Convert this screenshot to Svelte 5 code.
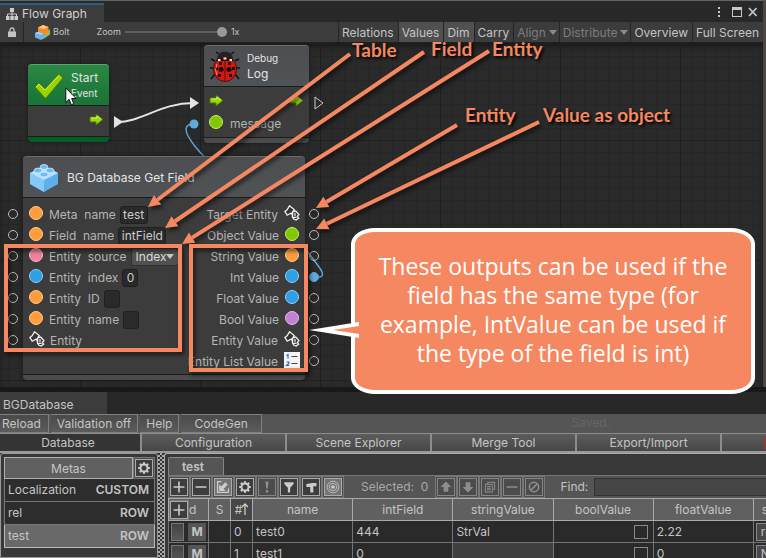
<script>
  const graphTools = [
    { label: 'Relations' },
    { label: 'Values', on: true },
    { label: 'Dim', on: true },
    { label: 'Carry' },
    { label: 'Align', off: true, menu: true },
    { label: 'Distribute', off: true, menu: true },
    { label: 'Overview' },
    { label: 'Full Screen' }
  ];
  const inputs = [
    { label: 'Meta  name', kind: 'orange', value: 'test', width: 28 },
    { label: 'Field  name', kind: 'orange', value: 'intField', width: 48 },
    { label: 'Entity  source', kind: 'pink', options: ['Index', 'Id', 'Name'] },
    { label: 'Entity  index', kind: 'blue', value: '0', width: 16 },
    { label: 'Entity  ID', kind: 'orange', value: '', width: 16 },
    { label: 'Entity  name', kind: 'orange', value: '', width: 16 },
    { label: 'Entity', kind: 'entity' }
  ];
  const outputs = [
    { label: 'Target Entity', kind: 'entity' },
    { label: 'Object Value', kind: 'green' },
    { label: 'String Value', kind: 'orange' },
    { label: 'Int Value', kind: 'blue', wired: true },
    { label: 'Float Value', kind: 'blue' },
    { label: 'Bool Value', kind: 'purple' },
    { label: 'Entity Value', kind: 'entity' },
    { label: 'Entity List Value', kind: 'list' }
  ];
  const arrows = [
    { x1: 350, y1: 54, x2: 148, y2: 207 },
    { x1: 424, y1: 52, x2: 165, y2: 228 },
    { x1: 489, y1: 51, x2: 182, y2: 244 },
    { x1: 457, y1: 125, x2: 316, y2: 208 },
    { x1: 539, y1: 122, x2: 316, y2: 229 }
  ];
  const notes = [
    { text: 'Table', x: 352, y: 38 },
    { text: 'Field', x: 431, y: 37 },
    { text: 'Entity', x: 492, y: 37 },
    { text: 'Entity', x: 465, y: 103 },
    { text: 'Value as object', x: 543, y: 103 }
  ];
  const dbButtons = ['Reload', 'Validation off', 'Help', 'CodeGen'];
  const dbTabs = ['Database', 'Configuration', 'Scene Explorer', 'Merge Tool', 'Export/Import'];
  const metas = [
    { name: 'Localization', type: 'CUSTOM' },
    { name: 'rel', type: 'ROW' },
    { name: 'test', type: 'ROW', on: true }
  ];
  const rows = [
    { n: 0, name: 'test0', int: '444', str: 'StrVal', float: '2.22', ref: 're' },
    { n: 1, name: 'test1', int: '0', str: '', float: '0', ref: 'N' }
  ];
  // Shaft ends and head corners of an arrow, in canvas pixels
  function shape(a) {
    const d = Math.hypot(a.x2 - a.x1, a.y2 - a.y1);
    const ux = (a.x2 - a.x1) / d;
    const uy = (a.y2 - a.y1) / d;
    const bx = a.x2 - ux * 12;
    const by = a.y2 - uy * 12;
    return {
      bx, by,
      head: `${a.x2},${a.y2} ${bx - uy * 6},${by + ux * 6} ${bx + uy * 6},${by - ux * 6}`
    };
  }
</script>

{#snippet icon(name)}
  <svg viewBox="0 0 18 18" width="18" height="18" aria-hidden="true">
    {#if name === 'plus'}
      <path d="M9 2v14M2 9h14" stroke-width="2" />
    {:else if name === 'minus'}
      <path d="M2 9h14" stroke-width="2" />
    {:else if name === 'import'}
      <path d="M7 2H2v14h14v-5" stroke-width="1.600" />
      <path class="f" d="M4 14V5.500L6.700 8.200 12 3l3 3-5.200 5.300 2.700 2.700z" />
    {:else if name === 'gear'}
      <circle cx="9" cy="9" r="4.500" stroke-width="2.400" />
      <path d="M9 1.500v3M9 13.500v3M1.500 9h3M13.500 9h3M3.700 3.700l2 2M12.300 12.300l2 2M3.700 14.300l2-2M12.300 5.700l2-2" stroke-width="2.800" />
    {:else if name === 'alert'}
      <path class="f" d="M7 2h4l-1 9H8zM7.500 13h3v3h-3z" />
    {:else if name === 'filter'}
      <path class="f" d="M3 3h12v2l-4.500 5v6h-3v-6L3 5z" />
    {:else if name === 'hammer'}
      <path class="f" d="M3 5l8-1h5v4h-4v8H8V9H3z" />
    {:else if name === 'target'}
      <circle cx="9" cy="9" r="7.500" /><circle cx="9" cy="9" r="4.800" /><circle class="f" cx="9" cy="9" r="2.300" />
    {:else if name === 'up'}
      <path class="f" d="M9 2l7 7h-4v6H6V9H2z" />
    {:else if name === 'down'}
      <path class="f" d="M9 16l7-7h-4V3H6v6H2z" />
    {:else if name === 'copy'}
      <path d="M6 5V3h9v9h-2M3 5.500h9v10H3zM5 8.500h5M5 10.500h5M5 12.500h5" stroke-width="1.300" />
    {:else if name === 'ban'}
      <circle cx="9" cy="9" r="6" stroke-width="2" /><path d="M5 13l8-8" stroke-width="2" />
    {/if}
  </svg>
{/snippet}

{#snippet tool(name, label, cls)}
  <button class="tool {cls}" aria-label={label}>{@render icon(name)}</button>
{/snippet}

{#snippet pin(kind)}
  {#if kind === 'entity'}
    <svg class="pin" viewBox="0 0 16 16" width="16" height="16" aria-hidden="true">
      <path d="M5.500.8l4.700 3.800-1.500 2.200 3-.8 3.200 3.500-1.600 2 1.400 1.600-2.600 2-2.400-1-1.300-2.600.1-2.500-1.700-.8-3.600 2L.9 6.400l2.200-1.600z" fill="#333" stroke="#eee" stroke-width="1.300" />
      <path d="M8.600 7v5.500h4M11 8v3.500M6.800 8.200L9 10" fill="none" stroke="#eee" stroke-width="1.200" />
    </svg>
  {:else if kind === 'list'}
    <svg class="pin" viewBox="0 0 16 16" width="16" height="16" aria-hidden="true">
      <rect width="16" height="16" fill="#f4f4f4" />
      <path d="M2.500 3.500l1.500-1v4M2.500 10h2.300v1.500L2.500 13.500h2.500" fill="none" stroke="#1c6fc0" stroke-width="1.200" />
      <path d="M7.500 4.500h6M7.500 11.500h6" stroke="#444" stroke-width="1.200" />
    </svg>
  {:else}
    <span class="dot {kind}"></span>
  {/if}
{/snippet}

{#snippet flow()}
  <svg class="flow" viewBox="0 0 15 13" width="15" height="13" aria-hidden="true">
    <path d="M1 4h6V1l7 5.500L7 12V9H1z" fill="#9bd60c" stroke="#4d7700" />
    <path d="M2 5h6V3l4 3" fill="none" stroke="#d3f46a" />
  </svg>
{/snippet}

<main>
  <section class="graph">
    <header class="winbar">
      <div class="wintab">
        <svg viewBox="0 0 12 12" width="12" height="12" aria-hidden="true">
          <path d="M4 0h4v4H4zM0 8h3.500v4H0zM4.300 8h3.500v4H4.300zM8.500 8H12v4H8.500z" fill="#ccc" />
          <path d="M6 4v4M1.500 8V6h9v2" fill="none" stroke="#ccc" />
        </svg>
        <span>Flow Graph</span>
      </div>
      <svg class="winctl" viewBox="0 0 42 12" width="42" height="12" aria-hidden="true">
        <path d="M3 1h2v2H3zM3 5h2v2H3zM3 9h2v2H3zM17 1h10v10H17z" fill="#c8c8c8" />
        <path d="M18 4h8v6h-8z" fill="#282828" />
        <path d="M34 2l7.500 8M41.500 2L34 10" stroke="#c8c8c8" stroke-width="1.600" />
      </svg>
    </header>

    <div class="bar">
      <button class="lock" aria-label="Lock">
        <svg viewBox="0 0 8 10" width="8" height="10"><path d="M0 4.500h8V10H0z" fill="#c4c4c4" /><path d="M2 5V3a2 2 0 014 0v2" fill="none" stroke="#c4c4c4" stroke-width="1.300" /></svg>
      </button>
      <div class="bolt">
        <svg viewBox="0 0 16 15" width="16" height="15" aria-hidden="true">
          <path d="M9 6l6-1.500v5L10 13z" fill="#a4b84a" />
          <path d="M0 8l4-1.500L10 8v5l-4 2-6-2.500z" fill="#6cb0e8" /><path d="M0 8l4-1.500L10 8 6 9.700z" fill="#a9d6f8" />
          <path d="M3 2.500L8 0l5.500 2v5.500L9 9 3 7z" fill="#ee8d2b" /><path d="M3 2.500L8 0l5.500 2L9 4z" fill="#ffc377" />
        </svg>
        <span>Bolt</span>
      </div>
      <label class="zoom"><span>Zoom</span><input type="range" min="0" max="100" value="100" /><span>1x</span></label>
      <div class="tools">
        {#each graphTools as t}
          <button class:on={t.on} class:off={t.off}>{t.label}{#if t.menu}<i class="caret"></i>{/if}</button>
        {/each}
      </div>
    </div>

    <div class="canvas">
      <svg class="layer" aria-hidden="true">
        <path d="M117 79C142 79 160 60 194 60" fill="none" stroke="#e4e4e4" stroke-width="2" />
        <path d="M114 73l9 6-9 6zM190 54l9 6-9 6z" fill="#e4e4e4" />
        <path d="M315 54l8 6-8 6z" fill="none" stroke="#ccc" />
        <path d="M194 81C174 81 196 107 215 124L305 205C312 215 318 222 321 227C325 234 320 235 314 234" fill="none" stroke="#5ba3d8" stroke-width="1.500" />
        <circle cx="194" cy="81" r="4.500" fill="#5fa9dd" />
      </svg>

      <article class="node start">
        <div class="head">
          <svg viewBox="0 0 30 26" width="30" height="26" aria-hidden="true">
            <path d="M1 14l4-4 6 6L25 1l4 4-17 20h-1z" fill="#9ad400" stroke="#4e7d00" /><path d="M2 14l3-3 6 6L25 2.500" fill="none" stroke="#d9f25b" />
          </svg>
          <div><b>Start</b><small>Event</small></div>
        </div>
        <div class="ports"><div class="slot end">{@render flow()}</div></div>
      </article>

      <article class="node log">
        <div class="head">
          <svg viewBox="0 0 30 32" width="30" height="32" aria-hidden="true">
            <path d="M9 3L6 1M21 3l3-2M5 10L1 8M25 10l4-2M4 17H0M26 17h4M5 23l-4 5M25 23l4 5" stroke="#111" stroke-width="1.500" />
            <path d="M7 8a8 7.500 0 0116 0z" fill="#222" />
            <ellipse cx="15" cy="18" rx="11.500" ry="12.500" fill="#d6190f" stroke="#5b0906" />
            <path d="M6 9q9-6 18 0l-1 1H7z" fill="#151515" /><path d="M8 8h2.500v2H8zM13.500 6.500h3v2h-3zM19.500 8H22v2h-2.500z" fill="#eee" />
            <path d="M15 9v21" stroke="#60100b" />
            <path d="M9 11h3v3H9zM18 11h3v3h-3zM5 16h3v3H5zM22 16h3v3h-3zM8 23h3v3H8zM19 23h3v3h-3z" fill="#1b0f0f" />
            <circle cx="11" cy="18.500" r="2.500" fill="#1b0f0f" /><circle cx="19" cy="18.500" r="2.500" fill="#1b0f0f" />
            <path d="M7 13q-3 6 0 11" fill="none" stroke="#ff8177" />
          </svg>
          <div><small>Debug</small><b>Log</b></div>
        </div>
        <div class="ports">
          <div class="slot">{@render flow()}<span class="push">{@render flow()}</span></div>
          <div class="slot">{@render pin('green')}<span>message</span></div>
        </div>
      </article>

      <article class="node field">
        <div class="head">
          <svg viewBox="0 0 30 30" width="30" height="30" aria-hidden="true">
            <path d="M1 10l14-7 14 7v11l-14 8-14-8z" fill="#5cb0ee" /><path d="M1 10l14 7v12L1 21z" fill="#86c8f8" /><path d="M1 10l14-7 14 7-14 7z" fill="#b8e2ff" />
            <g fill="#6fbcf2" stroke="#d9f1ff" stroke-width=".7"><ellipse cx="15" cy="4" rx="4" ry="2.500" /><ellipse cx="9" cy="7.500" rx="4" ry="2.500" /><ellipse cx="21" cy="7.500" rx="4" ry="2.500" /><ellipse cx="15" cy="11.500" rx="4" ry="2.500" /></g>
          </svg>
          <div><span class="title">BG Database Get Field</span></div>
        </div>
        <div class="ports cols">
          <div class="ins">
            {#each inputs as p}
              <div class="slot">
                <i class="port left"></i>{@render pin(p.kind)}
                <label><span>{p.label}</span>
                  {#if p.options}
                    <span class="pick"><select>{#each p.options as o}<option>{o}</option>{/each}</select><i class="caret"></i></span>
                  {:else if p.value !== undefined}
                    <input value={p.value} style:width="{p.width}px" />
                  {/if}
                </label>
              </div>
            {/each}
          </div>
          <div class="outs">
            {#each outputs as p}
              <div class="slot end"><span>{p.label}</span>{@render pin(p.kind)}<i class="port right" class:wired={p.wired}></i></div>
            {/each}
          </div>
        </div>
      </article>

      <svg class="cursor" viewBox="0 0 12 19" width="12" height="19" aria-hidden="true">
        <path d="M.8 1v14.500l3.300-3.200 2.200 5.400 2.500-1-2.200-5.200h4.600z" fill="#fff" stroke="#111" />
      </svg>
    </div>

    <svg class="layer marks" aria-hidden="true">
      {#each arrows as a}
        {@const s = shape(a)}
        <line x1={a.x1} y1={a.y1} x2={s.bx} y2={s.by} />
        <polygon points={s.head} />
      {/each}
      <rect x="6" y="246" width="174" height="104" />
      <rect x="191" y="246" width="115" height="124" />
    </svg>
    {#each notes as n}
      <strong class="note" style:left="{n.x}px" style:top="{n.y}px">{n.text}</strong>
    {/each}
    <aside class="callout">
      These outputs can be used if the field has the same type (for example, IntValue can be used if the type of the field is int)
      <svg viewBox="0 0 50 24" width="50" height="24" aria-hidden="true"><path d="M50 4L0 12l50 8z" fill="#fff" /><path d="M50 8L24 12l26 4z" fill="#f58761" /></svg>
    </aside>
  </section>

  <section class="db">
    <header class="dbbar"><div>BGDatabase</div></header>
    <div class="actions">
      {#each dbButtons as b}<button>{b}</button>{/each}
      <span class="saved">Saved.</span>
    </div>
    <nav>
      {#each dbTabs as t, i}<button class:on={i === 0}>{t}</button>{/each}
      <button aria-label="More"><i class="flag"></i></button>
    </nav>
    <div class="split">
      <div class="metas">
        <div class="mhead"><span>Metas</span>{@render tool('gear', 'Meta settings', '')}</div>
        {#each metas as m}
          <button class="meta" class:on={m.on}><span>{m.name}</span><b>{m.type}</b></button>
        {/each}
      </div>
      <div class="handle"></div>
      <div class="data">
        <div class="dtab">test</div>
        <div class="dtools">
          {@render tool('plus', 'Add', '')}{@render tool('minus', 'Remove', '')}{@render tool('import', 'Import', 'lit')}
          <i class="gap"></i>
          {@render tool('gear', 'Settings', '')}{@render tool('alert', 'Errors', 'dim')}{@render tool('filter', 'Filter', '')}{@render tool('hammer', 'Build', '')}{@render tool('target', 'Target', 'lit')}
          <span class="sel">Selected:&nbsp; 0</span>
          {@render tool('up', 'Move up', 'dim')}{@render tool('down', 'Move down', 'dim')}{@render tool('copy', 'Duplicate', 'dim')}{@render tool('minus', 'Delete', 'dim')}{@render tool('ban', 'Clear selection', 'dim')}
          <label class="find">Find: <input /></label>
          <button class="mini" aria-label="Previous"></button><button class="mini" aria-label="Next"></button><button class="mini" aria-label="All"></button>
          {@render tool('ban', 'Close search', 'dim over')}
        </div>
        <table>
          <colgroup><col class="w40" /><col class="w22" /><col class="w22" /><col class="w100" /><col class="w100" /><col class="w100" /><col class="w100" /><col class="w100" /><col class="w100" /></colgroup>
          <thead>
            <tr>
              <th class="id"><span>{@render tool('plus', 'Add row', '')}d</span></th>
              <th>S</th><th class="sort">#<svg viewBox="0 0 6 12" width="6" height="12" aria-hidden="true"><path d="M3 12V1M0 4l3-3 3 3" fill="none" stroke="#ccc" stroke-width="1.300" /></svg></th>
              <th>name</th><th>intField</th><th>stringValue</th><th>boolValue</th><th>floatValue</th><th class="txt">s</th>
            </tr>
          </thead>
          <tbody>
            {#each rows as r}
              <tr>
                <td class="ctl"><span><button class="grip" aria-label="Select row"></button><button class="m">M</button></span></td>
                <td></td><td>{r.n}</td><td>{r.name}</td><td>{r.int}</td><td class:empty={!r.str}>{r.str}</td>
                <td class="chk"><input type="checkbox" aria-label="boolValue" /></td><td>{r.float}</td>
                <td class="ctl"><button class="ref">{r.ref}</button></td>
              </tr>
            {/each}
          </tbody>
        </table>
      </div>
    </div>
  </section>
</main>

<style>
  :global(body) { margin: 0; background: #282828; }
  main { height: 100vh; overflow: hidden; display: flex; flex-direction: column; font: 12px/16px Inter, sans-serif; color: #c4c4c4; }
  button, input, select { font: inherit; color: inherit; box-sizing: border-box; margin: 0; padding: 0; border: 0; background: none; }
  svg { display: block; flex: none; }

  .graph { position: relative; border-right: 3px solid #4a4744; border-top: 1px solid #5c6866; background: #282828; }
  .winbar { display: flex; justify-content: space-between; align-items: center; height: 21px; }
  .wintab { display: flex; align-items: center; gap: 4px; box-sizing: border-box; height: 19px; margin-top: 2px; padding: 0 17px 0 6px; background: #3c3c3c; border-top: 2px solid #2c5d87; color: #d0d0d0; }
  .winctl { margin-right: 6px; }
  .bar { display: flex; height: 20px; background: #3c3c3c; border-bottom: 1px solid #202020; }
  .lock { width: 24px; border-right: 1px solid #252525; display: flex; align-items: center; justify-content: center; }
  .bolt { display: flex; align-items: center; gap: 2px; margin-left: 11px; font-size: 9px; }
  .zoom { display: flex; align-items: center; gap: 4px; margin-left: 27px; font-size: 9px; }
  .zoom input { appearance: none; width: 102px; height: 12px; background: linear-gradient(#5e5e5e, #5e5e5e) center / 100% 2px no-repeat; }
  .zoom input::-webkit-slider-thumb { appearance: none; width: 10px; height: 10px; border-radius: 50%; background: #999; }
  .tools { display: flex; margin-left: auto; }
  .tools button { display: flex; align-items: center; gap: 3px; padding: 1px 4px 0 3px; border-left: 1px solid #252525; white-space: nowrap; }
  .tools .on { background: #505050; }
  .tools .off { padding-right: 2px; color: #7d7d7d; }
  .caret { border: 4px solid transparent; border-top: 5px solid #8a8a8a; border-bottom: 0; }

  .canvas {
    position: relative; height: 344px; overflow: hidden; background-color: #2a2a2a;
    background-image: linear-gradient(#202020 1px, transparent 1px), linear-gradient(90deg, #202020 1px, transparent 1px),
      linear-gradient(#262626 1px, transparent 1px), linear-gradient(90deg, #262626 1px, transparent 1px);
    background-size: 120px 120px, 120px 120px, 12px 12px, 12px 12px;
    background-position: 80px 97px, 80px 97px, 8px 1px, 8px 1px;
    box-shadow: inset 0 4px 5px #1c1c1c;
  }
  .layer { position: absolute; inset: 0; width: 100%; height: 100%; }
  .cursor { position: absolute; left: 65px; top: 44px; }
  .node { position: absolute; box-sizing: border-box; border-radius: 4px; overflow: visible; background: #3c3c3c; border-bottom: 5px solid #4a4b4d; box-shadow: 0 0 4px #1a1a1a; }
  .head { display: flex; align-items: center; gap: 8px; height: 42px; box-sizing: border-box; padding: 1px 6px 0; border-radius: 4px 4px 0 0; border-top: 1px solid #6a6c6f; border-bottom: 1px solid #1c1c1c; background: linear-gradient(#4c4e52, #505356); color: #e4e4e4; }
  .head b, .head small { display: block; font-weight: 400; font-size: 12px; line-height: 16px; }
  .head small { font-size: 10px; line-height: 15px; }
  .title { white-space: nowrap; }
  .ports { border-bottom: 1px solid #1c1c1c; color: #b4b4b4; }
  .slot { position: relative; display: flex; align-items: center; gap: 6px; height: 21px; white-space: nowrap; }
  .end { justify-content: flex-end; }
  .push { margin-left: auto; }
  .start { left: 28px; top: 21px; width: 81px; border-bottom-color: #075c24; }
  .start .head { background: linear-gradient(#2a8743, #187437); border-top-color: #5aa572; gap: 7px; }
  .start .ports { padding: 3px 5px 6px; }
  .log { left: 204px; top: 2px; width: 105px; }
  .log .head { gap: 7px; }
  .log .ports { padding: 2px 5px 2px; }
  .log .slot { height: 23px; }
  .field { left: 23px; top: 113px; width: 282px; }
  .cols { display: flex; justify-content: space-between; padding: 6px 5px 2px; }
  .ins .slot { gap: 5px; padding-left: 1px; }
  .ins .slot label { display: flex; align-items: center; gap: 4px; white-space: pre; }
  .slot label input { height: 18px; background: #2a2a2a; border: 1px solid #202020; border-radius: 3px; text-align: center; color: #ccc; }
  .pick { display: flex; align-items: center; width: 48px; height: 18px; box-sizing: border-box; padding: 0 4px; border: 1px solid #303030; border-radius: 3px; background: #515151; color: #ddd; }
  .pick select { appearance: none; flex: 1; min-width: 0; }
  .pick .caret { border-top-color: #c8c8c8; }
  .dot { width: 14px; height: 14px; margin-right: 1px; box-sizing: border-box; border-radius: 50%; border: 1px solid #fff5; flex: none; }
  .cols .dot, .cols .pin, .log .dot { margin-bottom: 4px; }
  .orange { background: #ff9d3c; border-color: #ffce8c; }
  .pink { background: #ee82a0; border-color: #ffb4c8; }
  .blue { background: #2f9fe6; border-color: #8fd0fa; }
  .green { background: #82c800; border-color: #c8ee6c; }
  .purple { background: #c67fd6; border-color: #e8b8f0; }
  .port { position: absolute; top: 5px; width: 10px; height: 10px; box-sizing: border-box; border: 1px solid #bbb; border-radius: 50%; }
  .left { left: -20px; }
  .right { right: -19px; }
  .wired { background: #5fa9dd; border-color: #5fa9dd; }

  .marks { filter: drop-shadow(2px 3px 2px #0009); overflow: visible; top: -1px; }
  .marks line, .marks rect { fill: none; stroke: #f58761; stroke-width: 4; }
  .marks polygon { fill: #f58761; }
  .note { position: absolute; font: 700 19px/22px Lato, sans-serif; color: #f58761; text-shadow: 2px 2px 3px #000; white-space: nowrap; }
  .callout { position: absolute; left: 351px; right: 8px; top: 227px; height: 166px; box-sizing: border-box; padding: 20px 12px; border: 4px solid #fff; border-radius: 24px / 16px; background: #f58761; color: #fff; font: 23px/29px "Open Sans", sans-serif; text-align: center; z-index: 2; }
  .callout svg { position: absolute; left: -46px; top: 86px; }

  .db { flex: 1; min-height: 0; display: flex; flex-direction: column; background: #383838; border-top: 5px solid #191919; }
  .dbbar { display: flex; height: 22px; background: #282828; }
  .dbbar div { padding: 5px 34px 0 3px; background: #3c3c3c; }
  .actions { display: flex; gap: 2px; height: 19px; background: #555; }
  .actions button { padding: 0 6px; border: 1px solid #808080; border-left-width: 0; background: linear-gradient(#4a4a4a, #5c5c5c); white-space: nowrap; }
  .actions button:nth-child(1) { padding: 0 7px 0 2px; }
  .actions button:nth-child(4) { padding: 0 13px; }
  .saved { margin: 1px 156px 0 auto; color: #656565; }
  nav { display: flex; height: 20px; box-sizing: border-box; border-bottom: 2px solid #999; overflow: hidden; }
  nav button { flex: none; width: 145px; border-right: 2px solid #8c8c8c; border-top: 1px solid #8c8c8c; background: linear-gradient(#5c5c5c, #474747); }
  nav .on { width: 142px; padding-right: 4px; background: #343434; }
  .flag { display: block; width: 12px; height: 13px; margin-left: 43px; background: #c22; }
  .split { flex: 1; min-height: 0; display: flex; }
  .metas { flex: none; width: 151px; padding: 3px 2px 0 3px; border: 1px solid #999; border-radius: 3px 3px 0 0; }
  .mhead { display: flex; }
  .mhead span { flex: 1; text-align: center; line-height: 21px; height: 20px; background: #606060; border: 1px solid #b0b0b0; }
  .meta { display: flex; align-items: center; justify-content: space-between; width: 100%; height: 23px; padding: 0 5px 0 3px; background: #2d2d2d; border: 1px solid #777; border-top: 0; }
  .meta.on { background: #696969; border-color: #bbb; }
  .meta b { font-weight: 600; }
  .handle { flex: none; width: 6px; background: repeating-conic-gradient(#aaa 0 25%, #333 0 50%) 0 0 / 4px 4px; }
  .data { flex: 1; min-width: 0; overflow: hidden; padding: 3px 0 0 3px; border-top: 1px solid #aaa; border-left: 1px solid #aaa; border-radius: 3px 0 0 0; }
  .dtab { width: 56px; height: 18px; padding-right: 6px; line-height: 18px; text-align: center; font-weight: 600; background: #555; border: 1px solid #888; border-bottom: 0; box-sizing: border-box; border-radius: 2px 2px 0 0; }
  .dtools { display: flex; align-items: center; height: 23px; background: #555; border-top: 1px solid #777; box-sizing: border-box; }
  .tool { flex: none; width: 22px; height: 22px; padding: 1px; border: 1px solid #777; background: #4c4c4c; outline: 0; }
  .tool svg { box-sizing: border-box; width: 18px; height: 18px; padding: 1px; border: 1px solid #aaa; background: #3d3d3d; fill: none; stroke: #ccc; }
  .tool :global(.f) { fill: #ccc; stroke: none; }
  .lit svg { background: #747474; }
  .dim svg { border-color: #858585; stroke: #8d8d8d; background: #4c4c4c; }
  .dim :global(.f) { fill: #8d8d8d; }
  .over { margin-right: -17px; }
  .gap { width: 3px; }
  .sel { margin: 0 7px 0 17px; white-space: nowrap; color: #a8a8a8; }
  .find { display: flex; align-items: center; gap: 6px; margin: 0 5px 0 15px; flex: 1; }
  .find input { flex: 1; min-width: 40px; height: 18px; background: #464646; border: 1px solid #333; }
  .mini { flex: none; width: 12px; height: 14px; margin-right: 2px; border: 1px solid #6b6b6b; border-radius: 2px; background: #484848; }
  table { table-layout: fixed; width: 686px; border-collapse: collapse; }
  .w40 { width: 40px; } .w22 { width: 22px; } .w100 { width: 100px; }
  th, td { box-sizing: border-box; height: 22px; padding: 0 3px; border: 1px solid #757575; text-align: left; font-weight: 400; overflow: hidden; white-space: nowrap; background: #2a2a2a; }
  th { padding: 0; text-align: center; background: #606060; border-color: #aaa; }
  .sort { background: #474747; }
  .sort svg { display: inline-block; vertical-align: -1px; }
  .id { text-align: left; }
  .id span { display: flex; align-items: center; height: 21px; }
  .id .tool { width: 20px; height: 20px; padding: 0; }
  .txt { text-align: left; padding-left: 8px; }
  .ctl { padding: 0 2px; }
  .ctl span { display: flex; gap: 4px; }
  .grip { width: 13px; height: 18px; border: 1px solid #777; background: linear-gradient(#444, #585858); }
  .m { width: 18px; height: 18px; font-weight: 700; background: #555; }
  .ref { width: 60px; height: 18px; padding-left: 4px; text-align: left; border: 1px solid #888; background: #484848; }
  .empty { background: #404040; }
  .chk { padding-right: 5px; text-align: right; }
  .chk input { appearance: none; display: inline-block; vertical-align: middle; width: 14px; height: 14px; border: 1px solid #888; }
</style>
